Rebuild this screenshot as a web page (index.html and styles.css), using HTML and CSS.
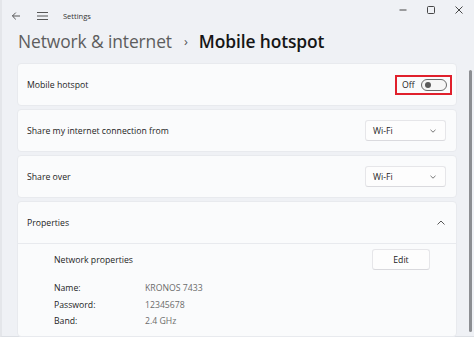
FILE: index.html
```html
<!DOCTYPE html>
<html lang="en">
<head>
<meta charset="utf-8">
<title>Settings</title>
<link rel="stylesheet" href="styles.css">
</head>
<body>
<div class="window">
  <div class="titlebar">
    <div class="tb-left">
      <svg class="ico-back" width="10" height="10" viewBox="0 0 10 10"><path d="M9 5H1.5M4.8 1.6L1.4 5l3.4 3.4" fill="none" stroke="#444" stroke-width="0.9"/></svg>
      <svg class="ico-menu" width="11" height="8" viewBox="0 0 11 8"><path d="M0 0.5h11M0 4h11M0 7.5h11" stroke="#444" stroke-width="0.9"/></svg>
      <span class="app-title">Settings</span>
    </div>
    <div class="tb-controls">
      <svg width="10" height="10" viewBox="0 0 10 10"><path d="M1.5 5h7" stroke="#333" stroke-width="0.9"/></svg>
      <svg width="10" height="10" viewBox="0 0 10 10"><rect x="1.5" y="1.5" width="7" height="7" rx="1" fill="none" stroke="#333" stroke-width="0.9"/></svg>
      <svg width="10" height="10" viewBox="0 0 10 10"><path d="M1.5 1.5l7 7M8.5 1.5l-7 7" stroke="#333" stroke-width="0.9"/></svg>
    </div>
  </div>
  <h1 class="heading"><span class="crumb">Network &amp; internet</span><span class="sep">›</span><span class="current">Mobile hotspot</span></h1>
  <div class="cards">
    <div class="card row">
      <span class="label">Mobile hotspot</span>
      <div class="toggle-wrap">
        <span class="toggle-text">Off</span>
        <span class="toggle"><span class="knob"></span></span>
      </div>
    </div>
    <div class="card row">
      <span class="label">Share my internet connection from</span>
      <div class="dropdown"><span>Wi-Fi</span><svg width="8" height="6" viewBox="0 0 8 6"><path d="M1.5 1.8L4 4.2l2.5-2.4" fill="none" stroke="#555" stroke-width="0.8"/></svg></div>
    </div>
    <div class="card row">
      <span class="label">Share over</span>
      <div class="dropdown"><span>Wi-Fi</span><svg width="8" height="6" viewBox="0 0 8 6"><path d="M1.5 1.8L4 4.2l2.5-2.4" fill="none" stroke="#555" stroke-width="0.8"/></svg></div>
    </div>
    <div class="card props">
      <div class="row props-head">
        <span class="label">Properties</span>
        <svg class="chev-up" width="10" height="8" viewBox="0 0 10 8"><path d="M1.5 5.5L5 2l3.5 3.5" fill="none" stroke="#444" stroke-width="0.9"/></svg>
      </div>
      <div class="props-body">
        <div class="np-row">
          <span class="label">Network properties</span>
          <span class="btn">Edit</span>
        </div>
        <dl class="kv">
          <dt>Name:</dt><dd>KRONOS 7433</dd>
          <dt>Password:</dt><dd>12345678</dd>
          <dt>Band:</dt><dd>2.4 GHz</dd>
        </dl>
      </div>
    </div>
  </div>
  <div class="scrollbar"></div>
</div>
</body>
</html>
```

FILE: styles.css
```css
* { box-sizing: border-box; }
html, body { margin: 0; padding: 0; }
body {
  width: 474px;
  height: 341px;
  background: #ffffff;
  font-family: "Open Sans", "Noto Sans", sans-serif;
  color: #1b1b1b;
  overflow: hidden;
}
.window {
  position: relative;
  width: 474px;
  height: 337px;
  background: #eff1f5;
  border-left: 2px solid #e4e6ea;
  border-bottom: 1px solid #dcdfe4;
}
.titlebar {
  height: 30px;
  display: flex;
  justify-content: space-between;
  align-items: flex-start;
}
.tb-left {
  display: flex;
  align-items: center;
  height: 32px;
  padding-left: 9px;
}
.ico-back { margin-right: 16px; }
.ico-menu { margin-right: 15px; }
.app-title {
  font-size: 7.5px;
  color: #333;
}
.tb-controls {
  display: flex;
  gap: 18px;
  padding: 5px 10px 0 0;
}
.heading {
  margin: 0;
  padding: 1px 0 0 16px;
  height: 33px;
  display: flex;
  align-items: flex-start;
  font-size: 17.4px;
  font-weight: 400;
  letter-spacing: -0.1px;
  line-height: 20px;
}
.crumb { color: #5d5d5d; }
.sep { color: #555; font-size: 13px; margin: 0 11px 0 12px; }
.current { color: #161616; font-weight: 600; }
.cards {
  display: flex;
  flex-direction: column;
  gap: 3px;
  padding: 0 17px 0 15px;
}
.card {
  background: #fafbfc;
  border: 1px solid #e8eaee;
  border-radius: 4px;
}
.row {
  height: 43px;
  display: flex;
  align-items: center;
  justify-content: space-between;
  padding: 0 10px 0 9px;
}
.label { font-size: 8.7px; color: #1d1d1d; }
.toggle-wrap {
  display: flex;
  align-items: center;
  height: 20px;
  width: 57px;
  border: 2px solid #e0202c;
  padding: 0 3px 0 5px;
  margin-right: -6px;
  justify-content: space-between;
}
.toggle-text { font-size: 8.7px; color: #1d1d1d; }
.toggle {
  position: relative;
  width: 26px;
  height: 12px;
  border: 1px solid #6a6a6a;
  border-radius: 6px;
  background: #f6f6f6;
}
.knob {
  position: absolute;
  left: 2.5px;
  top: 2px;
  width: 6px;
  height: 6px;
  border-radius: 50%;
  background: #5a5a5a;
}
.dropdown {
  width: 81px;
  height: 21px;
  display: flex;
  align-items: center;
  justify-content: space-between;
  padding: 0 8px 0 7px;
  background: #fdfdfd;
  border: 1px solid #e6e6e9;
  border-bottom-color: #dadade;
  border-radius: 3px;
  font-size: 8.7px;
  color: #1d1d1d;
}
.props-head { height: 42px; border-bottom: 1px solid #e8eaee; }
.props-body {
  padding: 5px 26px 6px 36px;
}
.np-row {
  display: flex;
  align-items: center;
  justify-content: space-between;
  height: 21px;
}
.btn {
  width: 58px;
  height: 21px;
  display: flex;
  align-items: center;
  justify-content: center;
  font-size: 8.7px;
  background: #fdfdfd;
  border: 1px solid #e6e6e9;
  border-bottom-color: #d9d9dd;
  border-radius: 3px;
}
.kv {
  margin: 10px 0 0 0;
  display: grid;
  grid-template-columns: 91px 1fr;
  font-size: 8.7px;
  line-height: 16.5px;
}
.kv dt { color: #1d1d1d; }
.kv dd { margin: 0; color: #6b6b6b; }
.scrollbar {
  position: absolute;
  left: 467px;
  top: 70px;
  width: 2.5px;
  height: 262px;
  border-radius: 2px;
  background: #8c8e92;
}
```
